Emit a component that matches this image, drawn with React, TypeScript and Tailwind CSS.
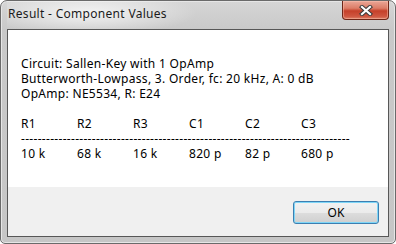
const cols = [
  ["R1", "10 k"],
  ["R2", "68 k"],
  ["R3", "16 k"],
  ["C1", "820 p"],
  ["C2", "82 p"],
  ["C3", "680 p"],
];

export default function App() {
  const font = { fontFamily: '"Noto Sans", "Open Sans", sans-serif' };
  return (
    <div className="w-[396px] h-[244px] bg-white" style={font}>
      <div className="relative w-full h-full rounded-t-[7px] rounded-b-[5px] border border-[#6a6a6a] bg-[linear-gradient(180deg,#d6d6d6_0px,#c9c9c9_28px,#c6c6c6_100%)] shadow-[inset_0_0_0_1px_#e6e6e6] flex flex-col px-[6px] pb-[6px]">
        <div className="h-[28px] pt-[5px] pl-[1px] text-[12px] leading-[15px] tracking-[0.3px] text-[#1b1b1b] bg-[radial-gradient(ellipse_110px_22px_at_80px_12px,rgba(255,255,255,0.75),rgba(255,255,255,0))]">
          Result - Component Values
        </div>
        <div className="absolute top-0 right-[6px] w-[47px] h-[19px] rounded-b-[4px] border border-t-0 border-[#6e2618] bg-[linear-gradient(180deg,#eaa697_0%,#dc7d67_40%,#c5402a_55%,#cf5640_85%,#dc8068_100%)] shadow-[inset_0_0_0_1px_rgba(255,200,180,0.45)] flex items-center justify-center">
          <svg width="14" height="11" viewBox="0 0 14 11">
            <path d="M3 2 L11 9 M11 2 L3 9" stroke="#3a3a3a" strokeWidth="4.2" strokeLinecap="square" />
            <path d="M3 2 L11 9 M11 2 L3 9" stroke="#ffffff" strokeWidth="2.2" strokeLinecap="square" />
          </svg>
        </div>
        <div className="flex-1 border border-[#575757] bg-white flex flex-col">
          <div className="h-[157px] pl-[13px] pt-[26px] text-[12px] leading-[15px] tracking-[0.3px] text-black">
            <div>Circuit: Sallen-Key with 1 OpAmp</div>
            <div>Butterworth-Lowpass, 3. Order, fc: 20 kHz, A: 0 dB</div>
            <div>OpAmp: NE5534, R: E24</div>
            <div className="h-[15px]" />
            <div className="flex">
              {cols.map(([h]) => (
                <div key={h} className="w-[56px]">{h}</div>
              ))}
            </div>
            <div className="whitespace-nowrap">{"-".repeat(79)}</div>
            <div className="flex">
              {cols.map(([h, v]) => (
                <div key={h} className="w-[56px]">{v}</div>
              ))}
            </div>
          </div>
          <div className="flex-1 bg-[#f0f0f0] flex justify-end items-start pt-[14px] pr-[9px]">
            <div className="w-[86px] h-[23px] rounded-[3px] border border-[#3c7fb1] shadow-[inset_0_0_0_1px_#7fd6f7] bg-[linear-gradient(180deg,#f2f2f2_0%,#ebebeb_50%,#dddddd_51%,#cfcfcf_100%)] flex items-center justify-center text-[12px] text-black">
              OK
            </div>
          </div>
        </div>
      </div>
    </div>
  );
}
